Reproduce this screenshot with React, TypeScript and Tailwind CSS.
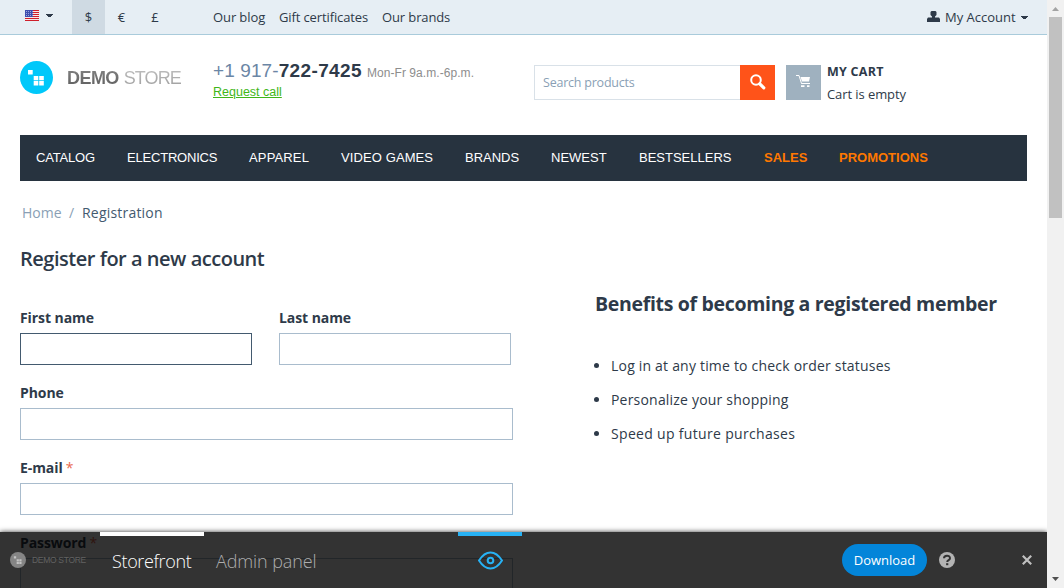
import { ReactNode } from "react";

const arial = "font-['Liberation_Sans',sans-serif]";

function Caret() {
  return (
    <svg width="7" height="4" viewBox="0 0 7 4" shapeRendering="crispEdges">
      <path d="M0 0h7v1H0zM1 1h5v1H1zM2 2h3v1H2z" fill="#2e3a49" />
    </svg>
  );
}

function Flag() {
  return (
    <svg width="14" height="11" viewBox="0 0 14 11">
      <rect width="14" height="11" fill="#f6e9ea" />
      {[0, 2, 4, 6, 8, 10].map((y) => (
        <rect key={y} y={y} width="14" height="1" fill="#cf1f2b" />
      ))}
      <rect width="8" height="7" fill="#3f4fae" />
      {[1, 3, 5].map((y) =>
        [1, 3, 5, 7].map((x) => <rect key={`${x}-${y}`} x={x} y={y} width="1" height="1" fill="#9aa3dc" />)
      )}
    </svg>
  );
}

function TopBar() {
  return (
    <div className="flex h-[35px] shrink-0 items-stretch border-b border-[#a9cbdb] bg-[#e6eef4] text-[13px] leading-[34px]">
      <div className="flex w-[72px] pl-[25px]">
        <div className="pt-[10px]"><Flag /></div>
        <div className="pt-[14px] pl-[7px]"><Caret /></div>
      </div>
      <div className="w-[33px] bg-[#cfdae3] text-center">$</div>
      <div className="w-[33px] text-center">€</div>
      <div className="w-[34px] text-center">£</div>
      <div className="w-[66px] pl-[41px] whitespace-nowrap tracking-[-0.100px]">Our blog</div>
      <div className="ml-[41px] w-[103px] whitespace-nowrap tracking-[-0.120px]">Gift certificates</div>
      <div className="flex-1 whitespace-nowrap tracking-[-0.120px]">Our brands</div>
      <div className="flex pr-[19px]">
        <svg className="mt-[11px] mr-[5px]" width="13" height="11" viewBox="0 0 13 11">
          <path d="M4.500 0h4l1 1v3l-1.500 1.500v1H12l1 1.500V11H0V8l1-1.500h4v-1L3.500 4V1z" fill="#2e3a49" />
        </svg>
        <span className="w-[76px] whitespace-nowrap">My Account</span>
        <div className="pt-[16px]"><Caret /></div>
      </div>
    </div>
  );
}

function LogoMark({ size, disc, squares }: { size: number; disc: string; squares: string }) {
  return (
    <svg className="shrink-0" width={size} height={size} viewBox="0 0 33 33">
      <circle cx="16.500" cy="16.500" r="16.500" fill={disc} />
      <path d="M8 9h4.700v4.500H8zM13.700 15h4.600v4.200h-4.600zM19.200 15h4.600v4.200h-4.600zM13.700 20.100h4.600v4.500h-4.600zM19.200 20.100h4.600v4.500h-4.600z" fill={squares} />
    </svg>
  );
}

function Header() {
  return (
    <div className="flex h-[100px] shrink-0 pl-5">
      <div className="flex w-[193px] pt-[26px]">
        <LogoMark size={33} disc="#00c8fa" squares="#ffffff" />
        <div className={`ml-[14px] flex h-[34px] items-center text-[18px] whitespace-nowrap ${arial}`}>
          <span className="bg-gradient-to-b from-[#8a8a8a] to-[#555555] bg-clip-text font-bold tracking-[-0.550px] text-transparent">DEMO</span>
          <span className="ml-[5px] bg-gradient-to-b from-[#c4c4c4] to-[#979797] bg-clip-text tracking-[-0.950px] text-transparent">STORE</span>
        </div>
      </div>
      <div className={`w-[321px] pt-[25px] whitespace-nowrap ${arial}`}>
        <div className="flex h-[22px] items-baseline text-[19px] leading-[22px]">
          <span className="tracking-[0.100px] text-[#6b86a5]">+1 917-</span>
          <span className="font-bold tracking-[0.370px] text-[#2e3a49]">722-7425</span>
          <span className="ml-[5px] text-[12px] tracking-[0.060px] text-[#8d8d8d]">Mon-Fr 9a.m.-6p.m.</span>
        </div>
        <div className="pt-px text-[12.500px] leading-[18px] text-[#3fb618] underline">Request call</div>
      </div>
      <div className="mt-[30px] flex h-[35px] w-[241px]">
        <div className="w-[206px] border border-r-0 border-[#d9e1e8] pl-2 text-[12.500px] leading-[34px] tracking-[-0.220px] text-[#8a9fb5]">Search products</div>
        <div className="w-[35px] bg-[#ff5319] pt-[9px] pl-[10px]">
          <svg width="16" height="16" viewBox="0 0 16 16" fill="none" stroke="#fff">
            <circle cx="6" cy="6" r="4.800" strokeWidth="2" />
            <path d="M9.800 9.800l4 4" strokeWidth="3.200" strokeLinecap="round" />
          </svg>
        </div>
      </div>
      <div className="mt-[30px] ml-[11px] h-[35px] w-[35px] bg-[#9fb1bf] pt-[10px] pl-[10px]">
        <svg width="15" height="13" viewBox="0 0 15 13">
          <path d="M0 .500h3l2.500 8h8.500" fill="none" stroke="#fff" strokeWidth="1" />
          <path d="M4.500 2H14L13 6.500H6Z" fill="#fff" />
          <path d="M5.500 8H14v1H5.500zM5 10.200h3.500v1.800H5zM11 10.200h2.500v1.800H11z" fill="#fff" />
        </svg>
      </div>
      <div className="ml-[6px] pt-[25px] text-[13px] leading-[23px] whitespace-nowrap">
        <div className="text-[12.500px] font-bold tracking-[0.250px]">MY CART</div>
        <div className="tracking-[-0.080px]">Cart is empty</div>
      </div>
    </div>
  );
}

function Nav() {
  return (
    <div className={`mx-5 flex h-[46px] shrink-0 bg-[#27333f] pl-4 text-[13px] leading-[45px] whitespace-nowrap text-white ${arial}`}>
      <div className="w-[91px] tracking-[-0.200px]">CATALOG</div>
      <div className="w-[122px] tracking-[-0.200px]">ELECTRONICS</div>
      <div className="w-[92px] tracking-[0.150px]">APPAREL</div>
      <div className="w-[124px] tracking-[0.100px]">VIDEO GAMES</div>
      <div className="w-[86px]">BRANDS</div>
      <div className="w-[88px]">NEWEST</div>
      <div className="w-[125px]">BESTSELLERS</div>
      <div className="w-[75px] font-bold text-[#ff7800]">SALES</div>
      <div className="font-bold text-[#ff7800]">PROMOTIONS</div>
    </div>
  );
}

function Field({ label, required, className }: { label: string; required?: boolean; className: string }) {
  return (
    <div className="h-[75px]">
      <div className="h-[25px] text-[14px] leading-[20px] font-bold tracking-[-0.080px] whitespace-nowrap">
        {label}
        {required && <span className="ml-[3px] font-normal text-[#e96a4f]">*</span>}
      </div>
      <div className={`h-8 border bg-white ${className}`} />
    </div>
  );
}

function Bullet({ children }: { children: ReactNode }) {
  return (
    <li className="flex h-[34px] items-center">
      <span className="mr-[12px] h-[5px] w-[5px] rounded-full bg-[#2e3a49]" />
      {children}
    </li>
  );
}

function Content() {
  return (
    <div className="flex h-[407px] shrink-0 flex-col overflow-hidden pl-5">
      <div className="flex pt-[22px] pl-[2px] text-[14px] leading-[20px]">
        <span className="w-[47px] text-[#8a9fb5]">Home</span>
        <span className="w-[13px] text-[#8a9fb5]">/</span>
        <span className="tracking-[0.200px] text-[#435a6f]">Registration</span>
      </div>
      <h1 className="mt-[19px] text-[20px] leading-[34px] font-semibold tracking-[-0.480px]">Register for a new account</h1>
      <div className="flex">
        <div className="mt-[32px] w-[493px]">
          <div className="flex gap-[27px]">
            <Field label="First name" className="w-[232px] border-[#435a6f]" />
            <Field label="Last name" className="w-[232px] border-[#a9bccd]" />
          </div>
          <Field label="Phone" className="w-[493px] border-[#a9bccd]" />
          <Field label="E-mail" required className="w-[493px] border-[#a9bccd]" />
          <Field label="Password" required className="w-[493px] border-[#a9bccd]" />
        </div>
        <div className="ml-[81px] whitespace-nowrap">
          <h2 className="mt-[14px] h-[58px] pl-px text-[19.500px] leading-[28px] font-bold tracking-[-0.320px]">Benefits of becoming a registered member</h2>
          <ul className="text-[14px] tracking-[0.200px]">
            <Bullet>Log in at any time to check order statuses</Bullet>
            <Bullet>Personalize your shopping</Bullet>
            <Bullet><span className="tracking-[0.320px]">Speed up future purchases</span></Bullet>
          </ul>
        </div>
      </div>
    </div>
  );
}

function DemoBar() {
  return (
    <div className="absolute inset-x-0 bottom-0 flex h-14 bg-black/80 text-white shadow-[0_0_5px_rgba(0,0,0,0.800)]">
      <div className="flex w-[100px] pt-[20px] pl-[10px]">
        <LogoMark size={16} disc="#858585" squares="#c4c4c4" />
        <span className={`ml-[6px] text-[8.500px] leading-[16px] tracking-[-0.300px] whitespace-nowrap text-[#626262] ${arial}`}>DEMO STORE</span>
      </div>
      <div className="w-[104px] border-t-4 border-white pl-[12px] text-[18px] leading-[51px] font-light tracking-[-0.350px] whitespace-nowrap">Storefront</div>
      <div className="w-[254px] pt-1 pl-[12px] text-[18px] leading-[51px] font-light tracking-[-0.100px] whitespace-nowrap text-[#adadad]">Admin panel</div>
      <div className="w-16 border-t-4 border-[#27b2f5] pt-[15px] pl-[20px]">
        <svg width="25" height="19" viewBox="0 0 25 19" fill="none" stroke="#27b2f5" strokeWidth="2">
          <path d="M1 9.500C4.500 4 8.300 1.500 12.500 1.500S20.500 4 24 9.500C20.500 15 16.700 17.500 12.500 17.500S4.500 15 1 9.500Z" />
          <circle cx="12.500" cy="9.500" r="2.800" />
        </svg>
      </div>
      <div className="mt-3 ml-[320px] h-8 w-[85px] rounded-full bg-[#0385d9] text-center text-[13px] leading-[32px]">Download</div>
      <svg className="mt-5 ml-3" width="16" height="16" viewBox="0 0 16 16">
        <circle cx="8" cy="8" r="8" fill="#b3b3b3" />
        <path d="M5 6.300C5 2.800 11 2.800 11 6.200C11 8.200 8.200 8 8.200 10" fill="none" stroke="#333" strokeWidth="2" />
        <rect x="7.100" y="11.200" width="2.200" height="2" fill="#333" />
      </svg>
      <svg className="mt-[23px] ml-[67px]" width="10" height="10" viewBox="0 0 10 10">
        <path d="M.800.800l8.400 8.400M9.200.800L.800 9.200" stroke="#c0c0c0" strokeWidth="2.200" />
      </svg>
    </div>
  );
}

function Scrollbar() {
  return (
    <div className="flex w-[17px] flex-col items-center bg-[#f1f1f1]">
      <svg className="mt-[7px]" width="7" height="4" viewBox="0 0 7 4"><path d="M3.500 0L7 4H0Z" fill="#a3a3a3" /></svg>
      <div className="mt-[6px] h-[201px] w-[13px] bg-[#c1c1c1]" />
      <svg className="mt-auto mb-[7px]" width="7" height="4" viewBox="0 0 7 4"><path d="M3.500 4L7 0H0Z" fill="#505050" /></svg>
    </div>
  );
}

export default function App() {
  return (
    <div className="flex h-[588px] w-[1064px] overflow-hidden bg-white font-['Open_Sans',sans-serif] text-[#2e3a49]">
      <div className="relative flex w-[1047px] flex-col overflow-hidden">
        <TopBar />
        <Header />
        <Nav />
        <Content />
        <DemoBar />
      </div>
      <Scrollbar />
    </div>
  );
}
